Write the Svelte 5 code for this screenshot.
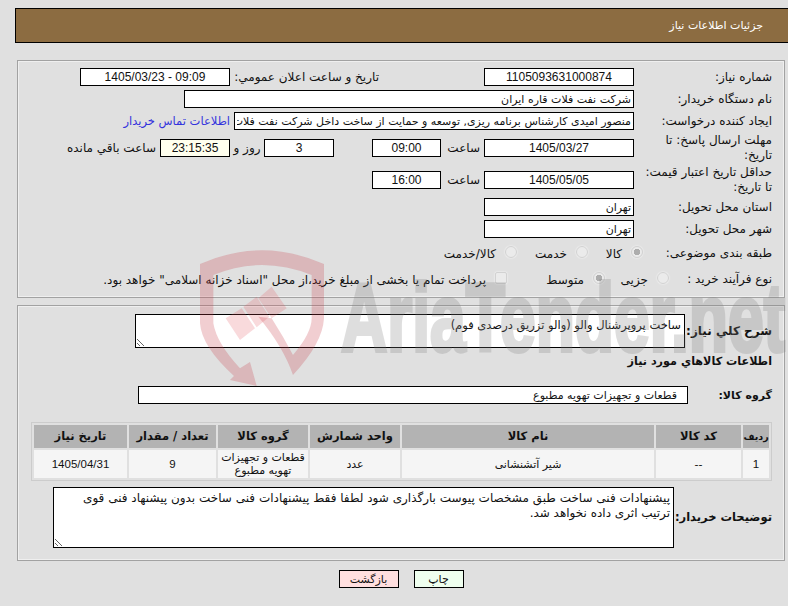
<script>
	const heads = ['ردیف', 'کد کالا', 'نام کالا', 'واحد شمارش', 'گروه کالا', 'تعداد / مقدار', 'تاریخ نیاز'];
	const cells = ['1', '--', 'شیر آتشنشانی', 'عدد', 'قطعات و تجهیزات تهویه مطبوع', '9', '1405/04/31'];
</script>

<div class="page" dir="rtl">
	<div class="bar">جزئیات اطلاعات نیاز</div>

	<section class="panel first">
		<div class="row">
			<span class="lbl">شماره نیاز:</span>
			<input class="box w150 num" readonly value="1105093631000874" />
			<span class="pub">تاریخ و ساعت اعلان عمومي:</span>
			<input class="box w150 num" dir="ltr" readonly value="1405/03/23 - 09:09" />
		</div>
		<div class="row">
			<span class="lbl">نام دستگاه خریدار:</span>
			<input class="box w450" readonly value="شرکت نفت فلات قاره ایران" />
		</div>
		<div class="row">
			<span class="lbl">ایجاد کننده درخواست:</span>
			<input class="box w400" readonly value="منصور امیدی کارشناس برنامه ریزی, توسعه و حمایت از ساخت داخل شرکت نفت فلات قاره ایران" />
			<a class="contact" href="#top">اطلاعات تماس خریدار</a>
		</div>
		<div class="row tall">
			<span class="lbl">مهلت ارسال پاسخ: تا<br />تاریخ:</span>
			<input class="box w150 num" readonly value="1405/03/27" />
			<span class="hour">ساعت</span>
			<input class="box w69 num" readonly value="09:00" />
			<input class="box w70 num days" readonly value="3" />
			<span class="and">روز و</span>
			<input class="box w70 num left" readonly value="23:15:35" />
			<span class="remain">ساعت باقي مانده</span>
		</div>
		<div class="row tall">
			<span class="lbl">حداقل تاریخ اعتبار قیمت:<br />تا تاریخ:</span>
			<input class="box w150 num" readonly value="1405/05/05" />
			<span class="hour">ساعت</span>
			<input class="box w69 num" readonly value="16:00" />
		</div>
		<div class="row">
			<span class="lbl">استان محل تحویل:</span>
			<input class="box w150" readonly value="تهران" />
		</div>
		<div class="row">
			<span class="lbl">شهر محل تحویل:</span>
			<input class="box w150" readonly value="تهران" />
		</div>
		<div class="row opts">
			<span class="lbl short">طبقه بندی موضوعی:</span>
			<input type="radio" name="kind" disabled checked />
			<span class="opt w34">کالا</span>
			<input type="radio" name="kind" disabled />
			<span class="opt w50">خدمت</span>
			<input type="radio" name="kind" disabled />
			<span class="opt">کالا/خدمت</span>
		</div>
		<div class="row opts">
			<span class="lbl shorter">نوع فرآیند خرید :</span>
			<input type="radio" name="proc" disabled />
			<span class="opt w43">جزیی</span>
			<input type="radio" name="proc" disabled checked />
			<span class="opt w77">متوسط</span>
			<input type="checkbox" disabled />
			<span class="opt">پرداخت تمام یا بخشی از مبلغ خرید،از محل "اسناد خزانه اسلامی" خواهد بود.</span>
		</div>
	</section>

	<section class="panel second">
		<div class="row desc">
			<b class="lbl w87">شرح کلي نیاز:</b>
			<textarea class="area w550 h34" readonly>ساخت پروپرشنال والو (والو تزریق درصدی فوم)</textarea>
		</div>
		<b class="title">اطلاعات کالاهاي مورد نیاز</b>
		<div class="row group">
			<b class="lbl w84">گروه کالا:</b>
			<input class="box w550 indent" readonly value="قطعات و تجهیزات تهویه مطبوع" />
		</div>

		<div class="table">
			{#each heads as h}
				<div class="th">{h}</div>
			{/each}
			{#each cells as c, i}
				<div class="td" class:num={i === 0 || i === 5 || i === 6}>{c}</div>
			{/each}
		</div>

		<div class="row notes">
			<b class="lbl w98">توضیحات خریدار:</b>
			<textarea class="area w621 h61" readonly>پیشنهادات فنی ساخت طبق مشخصات پیوست بارگذاری شود لطفا فقط پیشنهادات فنی ساخت بدون پیشنهاد فنی قوی ترتیب اثری داده نخواهد شد.</textarea>
		</div>
	</section>

	<div class="actions">
		<button class="print">چاپ</button>
		<button class="back">بازگشت</button>
	</div>

	<svg class="mark" viewBox="0 0 788 606" width="788" height="606" aria-hidden="true">
		<g transform="translate(190 240) scale(0.3333)">
			<path class="red" fill-rule="evenodd" d="M30 72 Q215 -10 402 72 L402 235 Q398 310 309 405 Q280 320 205 230 L245 235 Q280 290 309 345 Q365 280 365 235 L365 105 Q215 45 70 105 L70 250 Q80 310 150 385 L180 366 L200 438 L120 420 L132 408 Q35 320 30 250 Z" />
			<path class="pink" d="M107 235 L155 205 L195 265 L150 300 Z M160 200 L200 170 L238 230 L200 262 Z M205 175 L245 140 L290 205 L245 235 Z" />
		</g>
		<text class="brand" x="341" y="351" textLength="444" lengthAdjust="spacingAndGlyphs" direction="ltr">AriaTender.net</text>
	</svg>
</div>

<style>
	:global(body) {
		background: #e0e0e0;
	}

	.page {
		position: relative;
		width: 788px;
		height: 606px;
		overflow: hidden;
		padding-top: 8px;
		box-sizing: border-box;
		font-family: 'DejaVu Sans', sans-serif;
		font-size: 12px;
		color: #111;
	}

	.bar {
		height: 35px;
		margin-left: 15px;
		padding-right: 25px;
		box-sizing: border-box;
		border: 1px solid #000;
		border-right: 0;
		background: #8c6c41;
		color: #fff;
		font-size: 11px;
		line-height: 33px;
	}

	.panel {
		width: 768px;
		margin-right: 3px;
		box-sizing: border-box;
		border: 1px solid #a2a2a2;
		box-shadow: inset 0 0 0 1px #efefef;
		padding: 0 12px 0 0;
	}

	.first {
		height: 238px;
		margin-top: 17px;
		padding-top: 5px;
	}

	.second {
		height: 256px;
		margin-top: 7px;
		padding-top: 8px;
	}

	.row {
		display: flex;
		align-items: center;
		height: 22px;
	}

	.row.tall {
		height: 32px;
	}

	.row.opts {
		height: 26px;
	}

	.lbl {
		flex: none;
		width: 138px;
		padding-left: 6px;
		box-sizing: border-box;
		line-height: 15px;
		white-space: nowrap;
	}

	.lbl.short {
		width: 129px;
		padding-left: 0;
	}

	.lbl.shorter {
		width: 103px;
		padding-left: 0;
	}

	.lbl.w87 {
		width: 87px;
		padding-left: 0;
		font-size: 12px;
	}

	.lbl.w84 {
		width: 84px;
		padding-left: 0;
		font-size: 11px;
	}

	.lbl.w98 {
		width: 98px;
		padding-left: 0;
		font-size: 11.5px;
	}

	.box {
		flex: none;
		height: 18px;
		box-sizing: border-box;
		border: 1px solid #000;
		border-radius: 0;
		outline: 0;
		background: #fff;
		padding: 0 2px;
		margin: 0;
		font: 11px 'DejaVu Sans', sans-serif;
		color: #111;
	}

	.box.num {
		text-align: center;
		font: 12px 'Liberation Sans', sans-serif;
	}

	.w150 {
		width: 150px;
	}

	.w450 {
		width: 450px;
	}

	.w400 {
		width: 400px;
	}

	.w69 {
		width: 69px;
	}

	.w70 {
		width: 70px;
	}

	.w550 {
		width: 550px;
	}

	.w621 {
		width: 621px;
	}

	.indent {
		padding-right: 10px;
	}

	.pub {
		flex: none;
		width: 149px;
		margin-right: 105px;
	}

	.contact {
		margin-right: 4px;
		color: #3333dd;
		font-size: 11.5px;
		text-decoration: none;
	}

	.hour {
		flex: none;
		width: 39px;
		margin-right: 4px;
	}

	.days {
		margin-right: 38px;
	}

	.and {
		flex: none;
		width: 34px;
		text-align: center;
	}

	.left {
		background: #ffffee;
	}

	.remain {
		margin-right: 4px;
	}

	input[type='radio'],
	input[type='checkbox'] {
		flex: none;
		appearance: none;
		width: 12px;
		height: 12px;
		margin: -3px 0 0 0;
		box-sizing: border-box;
		border: 1px solid #d2d2d2;
		background: #ebebeb;
		box-shadow: 0 0 2px #fff;
	}

	input[type='radio'] {
		border-radius: 50%;
	}

	input[type='checkbox'] {
		border-radius: 2px;
	}

	input[type='radio']:checked {
		background: radial-gradient(circle, #adadad 0 3px, #ebebeb 3.5px);
	}

	.opt {
		flex: none;
		margin-right: 9px;
		padding-top: 2px;
	}

	.opt.w34 {
		width: 34px;
	}

	.opt.w50 {
		width: 50px;
	}

	.opt.w43 {
		width: 43px;
	}

	.opt.w77 {
		width: 77px;
	}

	.row.desc {
		height: 34px;
	}

	.row.group {
		height: 18px;
		margin-top: 14px;
	}

	.row.notes {
		height: 61px;
		margin-top: 6px;
	}

	.area {
		flex: none;
		box-sizing: border-box;
		border: 1px solid #000;
		border-radius: 0;
		outline: 0;
		background: #fff;
		padding: 3px 3px 2px;
		margin: 0;
		overflow: hidden;
		font: 12px/15px 'DejaVu Sans', sans-serif;
		color: #111;
	}

	.h34 {
		height: 34px;
		font-size: 11.5px;
	}

	.h61 {
		height: 61px;
	}

	.title {
		display: block;
		height: 20px;
		margin-top: 4px;
		font-size: 11.2px;
		line-height: 20px;
	}

	.table {
		display: grid;
		grid-template-columns: 26px 85px 252px 90px 90px 87px 93px;
		grid-template-rows: 23px 28px;
		gap: 2px;
		width: 741px;
		margin-top: 18px;
		box-sizing: border-box;
		padding: 2px;
		border: 1px solid #ccc;
	}

	.th,
	.td {
		display: flex;
		align-items: center;
		justify-content: center;
		text-align: center;
		font-size: 11px;
		line-height: 13px;
	}

	.th {
		background: #b3b3b3;
		font-weight: 700;
		font-size: 11.5px;
	}

	.th:first-child {
		font-size: 9.5px;
	}

	.td {
		background: #f5f5f5;
	}

	.td.num {
		font: 11.5px 'Liberation Sans', sans-serif;
	}

	.actions {
		display: flex;
		justify-content: center;
		gap: 15px;
		width: 768px;
		margin: 9px 3px 0 0;
	}

	button {
		height: 18px;
		padding: 0;
		box-sizing: border-box;
		border: 1px solid #000;
		border-radius: 0;
		font: 11px 'DejaVu Sans', sans-serif;
		color: #111;
	}

	.print {
		width: 50px;
		background: #efffef;
	}

	.back {
		width: 60px;
		background: #ffdfdf;
	}

	.mark {
		position: absolute;
		top: 0;
		left: 0;
		pointer-events: none;
	}

	.red {
		fill: rgba(200, 60, 70, 0.25);
	}

	.pink {
		fill: rgba(225, 70, 80, 0.2);
	}

	.brand {
		font: 700 96px 'Liberation Sans', sans-serif;
		fill: #808080;
		stroke: #808080;
		stroke-width: 4px;
		opacity: 0.25;
	}
</style>
